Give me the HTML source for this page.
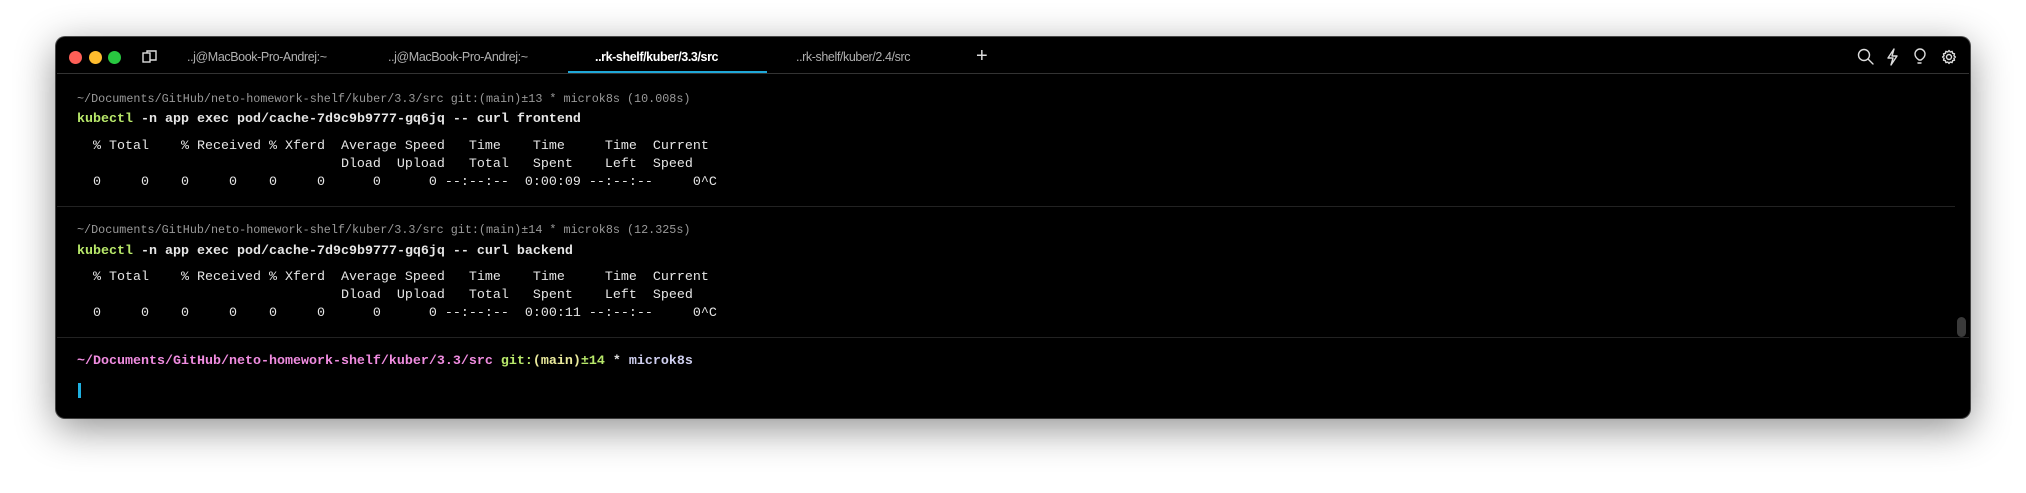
<!DOCTYPE html>
<html><head><meta charset="utf-8"><style>
html,body{margin:0;padding:0;width:2026px;height:493px;background:#fff;overflow:hidden}
.win{position:absolute;left:56px;top:37px;width:1914px;height:381px;background:#000;border-radius:9px;box-shadow:0 10px 40px rgba(0,0,0,.45),0 0 0 1px #555;overflow:hidden}
.t{position:absolute;white-space:pre;font-family:"Liberation Mono",monospace;line-height:18px}
.m{font-size:13.33px;color:#e6e6e6}
.g{font-size:11.75px;color:#9a9a9a}
.b{font-weight:bold}
.tab{position:absolute;top:0;height:36px;line-height:40px;font-family:"Liberation Sans",sans-serif;font-size:12.5px;color:#b0b0b0;letter-spacing:-0.4px}
.dot{position:absolute;top:51px;width:13px;height:13px;border-radius:50%}
.hr{position:absolute;height:1px;background:#222}
</style></head><body>
<div class="win"></div>
<div class="dot" style="left:69px;background:#fe5f57"></div>
<div class="dot" style="left:89px;background:#febc2e"></div>
<div class="dot" style="left:108px;background:#28c840"></div>
<svg style="position:absolute;left:142px;top:50px" width="16" height="14" viewBox="0 0 16 14"><rect x="1" y="3" width="7" height="9" fill="none" stroke="#ddd" stroke-width="1.4"/><path d="M5 3V1h9v9h-6" fill="none" stroke="#ddd" stroke-width="1.4"/></svg>
<div class="tab" style="left:187px;top:37px">..j@MacBook-Pro-Andrej:~</div>
<div class="tab" style="left:388px;top:37px">..j@MacBook-Pro-Andrej:~</div>
<div class="tab" style="left:595px;top:37px;color:#fff;font-weight:bold">..rk-shelf/kuber/3.3/src</div>
<div class="tab" style="left:796px;top:37px">..rk-shelf/kuber/2.4/src</div>
<div style="position:absolute;left:568px;top:71px;width:199px;height:2px;background:#1fa8d8"></div>
<div style="position:absolute;left:976px;top:45px;color:#ddd;font:20px 'Liberation Sans',sans-serif">+</div>
<div class="hr" style="left:57px;top:73px;width:1912px;background:#333"></div>
<svg style="position:absolute;left:1857px;top:48px" width="110" height="18" viewBox="0 0 110 18" fill="none" stroke="#ddd" stroke-width="1.4" stroke-linecap="round" stroke-linejoin="round">
<circle cx="7" cy="7" r="5.5"/><path d="M11 11l5 5"/>
<path d="M37 1l-6 9h5l-2 7 6-9h-5z"/>
<path d="M62 12c-3-2-4-4-4-6a5 5 0 0110 0c0 2-1 4-4 6z"/><path d="M61 15h3"/>
<circle cx="92" cy="9" r="2.5"/>
<path d="M92 2.5l1.2 1.5 1.9-.6.5 1.9 1.9.5-.6 1.9 1.5 1.3-1.5 1.3.6 1.9-1.9.5-.5 1.9-1.9-.6-1.2 1.5-1.2-1.5-1.9.6-.5-1.9-1.9-.5.6-1.9-1.5-1.3 1.5-1.3-.6-1.9 1.9-.5.5-1.9 1.9.6z"/>
</svg>
<div class="t g" style="left:77px;top:90px">~/Documents/GitHub/neto-homework-shelf/kuber/3.3/src git:(main)±13 * microk8s (10.008s)</div>
<div class="t m b" style="left:77px;top:111px"><span style="color:#b8e86a">kubectl</span> -n app exec pod/cache-7d9c9b9777-gq6jq -- curl frontend</div>
<div class="t m" style="left:77px;top:138px">  % Total    % Received % Xferd  Average Speed   Time    Time     Time  Current
                                 Dload  Upload   Total   Spent    Left  Speed
  0     0    0     0    0     0      0      0 --:--:--  0:00:09 --:--:--     0^C</div>
<div class="hr" style="left:57px;top:206px;width:1898px"></div>
<div class="t g" style="left:77px;top:221px">~/Documents/GitHub/neto-homework-shelf/kuber/3.3/src git:(main)±14 * microk8s (12.325s)</div>
<div class="t m b" style="left:77px;top:243px"><span style="color:#b8e86a">kubectl</span> -n app exec pod/cache-7d9c9b9777-gq6jq -- curl backend</div>
<div class="t m" style="left:77px;top:269px">  % Total    % Received % Xferd  Average Speed   Time    Time     Time  Current
                                 Dload  Upload   Total   Spent    Left  Speed
  0     0    0     0    0     0      0      0 --:--:--  0:00:11 --:--:--     0^C</div>
<div class="hr" style="left:57px;top:337px;width:1912px"></div>
<div style="position:absolute;left:1957px;top:317px;width:9px;height:20px;border-radius:5px;background:#3a3a3a"></div>
<div class="t m b" style="left:77px;top:353px"><span style="color:#f08ce0">~/Documents/GitHub/neto-homework-shelf/kuber/3.3/src</span> <span style="color:#b8e86a">git:</span><span style="color:#eaea9c">(main)</span><span style="color:#b8e86a">±14</span> <span style="color:#ddd">*</span> <span style="color:#cfcfef">microk8s</span></div>
<div style="position:absolute;left:78px;top:383px;width:3px;height:15px;background:#1fb0e0"></div>
</body></html>
